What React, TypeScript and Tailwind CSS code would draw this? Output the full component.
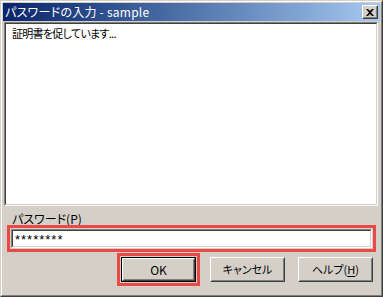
import type { ReactNode } from "react";

const jp = "font-['Noto_Sans_CJK_JP',sans-serif] [font-feature-settings:'palt']";

function Raised({ children, className = "" }: { children: ReactNode; className?: string }) {
  return (
    <div className={`border border-t-white border-l-white border-r-[#404040] border-b-[#404040] ${className}`}>
      <div className="w-full h-full border border-t-[#d4d0c8] border-l-[#d4d0c8] border-r-[#808080] border-b-[#808080] flex items-center justify-center">
        {children}
      </div>
    </div>
  );
}

function Sunken({ children, className = "" }: { children?: ReactNode; className?: string }) {
  return (
    <div className={`border border-t-[#808080] border-l-[#808080] border-r-white border-b-white ${className}`}>
      <div className="w-full h-full border border-t-[#404040] border-l-[#404040] border-r-[#d4d0c8] border-b-[#d4d0c8] bg-white">
        {children}
      </div>
    </div>
  );
}

function DefaultButton({ children }: { children: ReactNode }) {
  return (
    <div className="w-[75px] h-[25px] border border-black">
      <Raised className="w-full h-full">{children}</Raised>
    </div>
  );
}

export default function App() {
  return (
    <div className={`w-[383px] h-[297px] bg-[#d4d0c8] text-black ${jp}`}>
      <div className="w-full h-full border border-t-[#d4d0c8] border-l-[#d4d0c8] border-r-[#404040] border-b-[#404040]">
        <div className="w-full h-full border border-t-white border-l-white border-r-[#808080] border-b-[#808080] p-[1px] flex flex-col">
          {/* title bar */}
          <div className="h-[18px] flex items-center justify-between bg-gradient-to-r from-[#0a246a] to-[#a6caf0]">
            <span className="pl-[2px] text-[12px] leading-[14px] tracking-[0.25px] text-white whitespace-pre">パスワードの入力 - sample</span>
            <Raised className="w-[16px] h-[14px] mr-[2px] bg-[#d4d0c8]">
              <svg width="8" height="7" viewBox="0 0 8 7" className="block">
                <path d="M0 0h2l2 2 2-2h2L5 3.5 8 7H6L4 5 2 7H0l3-3.5z" fill="#000" />
              </svg>
            </Raised>
          </div>

          {/* message area */}
          <Sunken className="mt-[1px] ml-[1px] w-[374px] h-[184px]">
            <div className="pl-[6px] pt-[2px] text-[11px] leading-[14px] tracking-[-0.7px]">証明書を促しています...</div>
          </Sunken>

          {/* password label */}
          <div className="h-[19px] pl-[9px] pt-[7px] text-[12px] leading-[12px]">
            パスワード(<span className="underline underline-offset-2">P</span>)
          </div>

          {/* password field */}
          <div className="ml-[4px] w-[369px] h-[27px] border-[3px] border-[#eb4848] p-[1px]">
            <Sunken className="w-full h-full">
              <div className="pl-[2px] pt-[1px] font-['Liberation_Sans',sans-serif] text-[13px] leading-[15px] tracking-[1px]">********</div>
            </Sunken>
          </div>

          {/* buttons */}
          <div className="mt-[1px] ml-[114px] flex items-start text-[12px]">
            <div className="border-[3px] border-[#eb4848] p-[1px]">
              <DefaultButton>OK</DefaultButton>
            </div>
            <Raised className="mt-[4px] ml-[10px] w-[75px] h-[25px] text-[11px]">キャンセル</Raised>
            <Raised className="mt-[4px] ml-[13px] w-[75px] h-[25px] text-[11px]">
              <span>
                ヘルプ(<span className="underline underline-offset-2">H</span>)
              </span>
            </Raised>
          </div>
        </div>
      </div>
    </div>
  );
}
